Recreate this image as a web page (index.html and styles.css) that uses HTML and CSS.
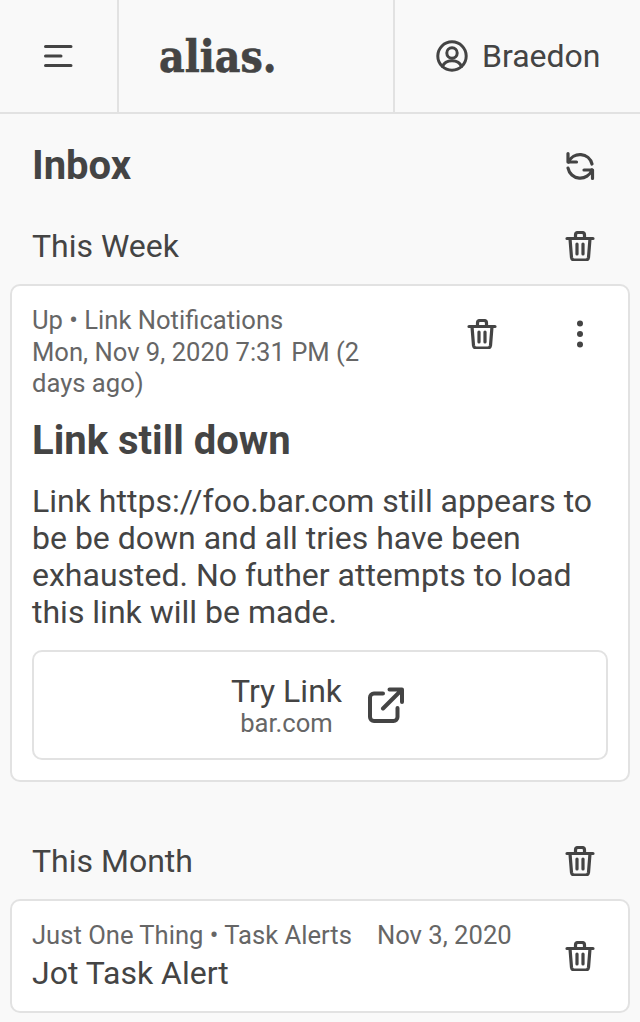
FILE: index.html
```html
<!DOCTYPE html>
<html lang="en">
<head>
<meta charset="utf-8">
<title>Inbox - alias.</title>
<link rel="stylesheet" href="styles.css">
</head>
<body>
<header class="topbar">
  <button class="menu-btn" aria-label="Menu">
    <svg class="icon" viewBox="0 0 30 30"><path d="M1.500 5.500H27M1.500 15H17M1.500 24.500H27"/></svg>
  </button>
  <div class="logo-cell"><span class="logo">alias.</span></div>
  <div class="user-cell">
    <svg class="icon user-icon" viewBox="0 0 32 32"><circle cx="16" cy="16" r="14.200"/><circle cx="16" cy="13" r="5.200"/><path d="M6.500 26.500c1.500-4 5-5.800 9.500-5.800s8 1.800 9.500 5.800"/></svg>
    <span>Braedon</span>
  </div>
</header>
<main class="content">
  <div class="page-head">
    <h1>Inbox</h1>
    <svg class="icon icon-heavy" viewBox="0 0 30 30"><path d="M3 2.500v8.500h8.500M27.500 27.500V19h-8.500"/><path d="M3.500 11A12.500 12.500 0 0 1 27 13M27 19A12.500 12.500 0 0 1 3 17"/></svg>
  </div>
  <div class="group-head">
    <h2>This Week</h2>
    <svg class="icon icon-heavy" viewBox="0 0 30 30"><use href="#trash"/></svg>
  </div>
  <article class="card card-open">
    <div class="card-top">
      <p class="meta">Up • Link Notifications<br>Mon, Nov 9, 2020 7:31 PM (2 days ago)</p>
      <div class="card-actions">
        <svg class="icon icon-heavy" viewBox="0 0 30 30"><use href="#trash"/></svg>
        <svg class="icon" viewBox="0 0 30 30"><circle class="dot" cx="15" cy="4.500" r="3"/><circle class="dot" cx="15" cy="15" r="3"/><circle class="dot" cx="15" cy="25.500" r="3"/></svg>
      </div>
    </div>
    <h3>Link still down</h3>
    <p class="body">Link https://foo.bar.com still appears to be be down and all tries have been exhausted. No futher attempts to load this link will be made.</p>
    <a class="try-link" href="#">
      <span class="try-text"><span class="try-main">Try Link</span><span class="try-sub">bar.com</span></span>
      <svg class="icon open-icon" viewBox="0 0 36 36"><path d="M15 6.500H6a4 4 0 0 0-4 4V30a4 4 0 0 0 4 4h19.500a4 4 0 0 0 4-4V21M15 21.500 33.500 3M21.500 2.500h12.500V15"/></svg>
    </a>
  </article>
  <div class="group-head group-month">
    <h2>This Month</h2>
    <svg class="icon icon-heavy" viewBox="0 0 30 30"><use href="#trash"/></svg>
  </div>
  <article class="card card-row">
    <div class="row-text">
      <p class="meta row-meta"><span>Just One Thing • Task Alerts</span><span>Nov 3, 2020</span></p>
      <p class="row-title">Jot Task Alert</p>
    </div>
    <svg class="icon icon-heavy" viewBox="0 0 30 30"><use href="#trash"/></svg>
  </article>
</main>
<svg class="defs" aria-hidden="true"><defs><g id="trash"><path d="M2 7.500h26M5 7.500l1.500 19a3 3 0 0 0 3 2.500h11a3 3 0 0 0 3-2.500l1.500-19M10.500 7.500V4a2.500 2.500 0 0 1 2.500-2.500h4A2.500 2.500 0 0 1 19.500 4v3.500M12 13v10M18 13v10"/></g></defs></svg>
</body>
</html>
```
FILE: styles.css
```css
* { box-sizing: border-box; }
html, body { margin: 0; padding: 0; }
body {
  width: 640px;
  height: 1022px;
  overflow: hidden;
  background: #f9f9f9;
  color: #444;
  font-family: Roboto, sans-serif;
}
h1, h2, h3, p { margin: 0; font-weight: 400; }
.defs { display: none; }
.icon {
  width: 30px;
  height: 30px;
  flex: none;
  fill: none;
  stroke: #444;
  stroke-width: 3;
  stroke-linecap: round;
  stroke-linejoin: round;
}
.icon-heavy { stroke-width: 3.200; }
.dot { fill: #444; stroke: none; }
.topbar {
  display: flex;
  height: 114px;
  border-bottom: 2px solid #e2e2e2;
}
.menu-btn {
  width: 119px;
  border: 0;
  border-right: 2px solid #e2e2e2;
  background: none;
  padding: 0;
  display: flex;
  align-items: center;
  justify-content: center;
}
.logo-cell {
  flex: 1;
  display: flex;
  align-items: center;
  padding-left: 40px;
}
.logo {
  font-family: "DejaVu Serif Condensed", "DejaVu Serif", serif;
  font-weight: 700;
  font-size: 44px;
  -webkit-text-stroke: 0.6px #444;
}
.user-cell {
  width: 247px;
  border-left: 2px solid #e2e2e2;
  display: flex;
  align-items: center;
  gap: 14px;
  padding-left: 41px;
  font-size: 32px;
}
.user-icon { width: 32px; height: 32px; }
.content { padding: 0 10px; }
.page-head, .group-head {
  display: flex;
  align-items: center;
  justify-content: space-between;
  padding: 0 35px 0 22px;
}
.page-head { height: 104px; }
h1 { font-size: 40px; font-weight: 700; margin-bottom: 2px; }
.group-head { height: 60px; padding-bottom: 4px; }
h2 { font-size: 32px; }
.card {
  background: #fff;
  border: 2px solid #e2e2e2;
  border-radius: 10px;
}
.card-open {
  height: 498px;
  padding: 19px 20px 20px;
  margin-top: 6px;
}
.card-top { display: flex; justify-content: space-between; }
.meta { font-size: 25.600px; line-height: 31.500px; color: #666; }
.card-top .meta { width: 340px; }
.card-actions {
  display: flex;
  gap: 68px;
  padding: 14px 13px 0 0;
}
h3 { font-size: 40px; font-weight: 700; line-height: 48px; margin-top: 17px; }
.body { font-size: 32px; line-height: 37px; margin-top: 18px; }
.try-link {
  height: 110px;
  margin-top: 19px;
  border: 2px solid #e2e2e2;
  border-radius: 10px;
  color: inherit;
  text-decoration: none;
  display: flex;
  align-items: center;
  justify-content: center;
  gap: 26px;
  padding-right: 5px;
}
.try-text { display: flex; flex-direction: column; align-items: center; }
.try-main { font-size: 32px; line-height: 37px; }
.try-sub { font-size: 25.600px; line-height: 27px; color: #666; }
.open-icon { width: 36px; height: 36px; stroke-width: 4; }
.group-month { margin-top: 51px; }
.card-row {
  height: 114px;
  margin-top: 6px;
  padding: 0 33px 0 20px;
  display: flex;
  align-items: center;
  justify-content: space-between;
}
.row-meta { display: flex; gap: 25px; }
.row-title { font-size: 32px; line-height: 37px; margin-top: 4px; }
```
